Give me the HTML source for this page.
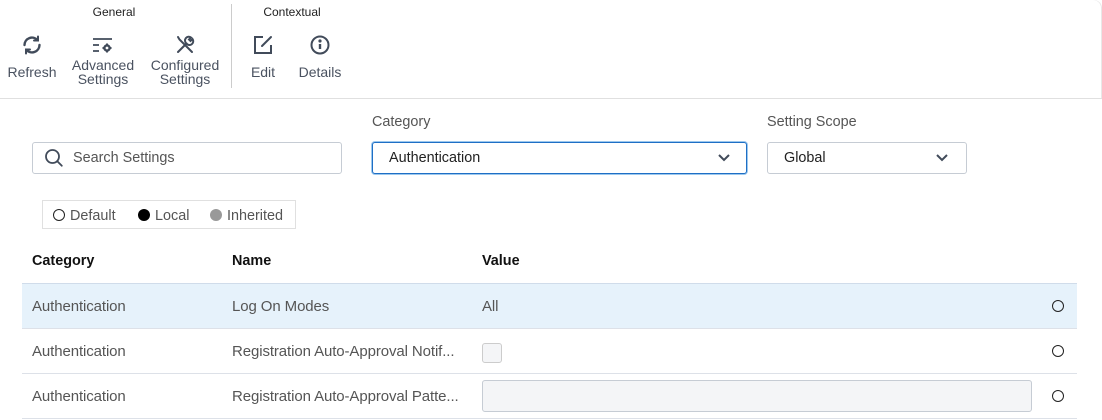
<!DOCTYPE html>
<html><head><meta charset="utf-8"><style>
*{box-sizing:border-box;margin:0;padding:0}
body{width:1102px;height:420px;background:#fff;font-family:"Liberation Sans",sans-serif;position:relative;overflow:hidden;color:#333}
.a{position:absolute}
.lbl{font-size:12px;color:#222;text-align:center}
.tl{font-size:14px;color:#4a5260;text-align:center;line-height:14px;white-space:nowrap}
.ic{position:absolute;width:22px;height:22px}
.box{position:absolute;border:1px solid #c6ccd4;border-radius:3px;background:#fff}
.t{font-size:14.4px;color:#222;position:absolute;line-height:17px}
.row{position:absolute;left:22px;width:1055px;height:45px;border-top:1px solid #dde1e8}
.row span{position:absolute;top:14px;font-size:15px;color:#555;letter-spacing:-0.1px;line-height:17px}
.circ{position:absolute;left:1030px;top:16px;width:12px;height:12px;border:1.3px solid #222;border-radius:50%}
</style></head><body>
<div class="a" style="left:0;top:0;width:1102px;height:99px;border-bottom:1px solid #e0e0e0;border-top-right-radius:8px;box-shadow:inset -1px 0 0 #e8e8e8"></div>
<div class="a lbl" style="left:74px;top:5px;width:80px">General</div>
<div class="a lbl" style="left:252px;top:5px;width:80px">Contextual</div>
<div class="a" style="left:231px;top:4px;width:1px;height:84px;background:#ccc"></div>

<svg class="ic" style="left:21px;top:34px" viewBox="0 0 22 22" fill="none" stroke="#414b5a" stroke-width="2.4" stroke-linecap="round"><path d="M3.5 11a7.5 7.5 0 0 1 13-5"/><path d="M18.5 11a7.5 7.5 0 0 1-13 5"/><path d="M17 2.5v4h-4" stroke-width="2"/><path d="M5 19.5v-4h4" stroke-width="2"/></svg>
<div class="a tl" style="left:2px;top:65px;width:60px">Refresh</div>

<svg class="ic" style="left:92px;top:34px" viewBox="0 0 22 22" fill="none" stroke="#414b5a" stroke-width="1.8"><path d="M1 5h19M1 11h6M1 17h6"/><circle cx="15" cy="14" r="2.6" stroke-width="2.4"/><path d="M15 9.5v2M15 16.5v2M10.5 14h2M17.5 14h2" stroke-width="2"/></svg>
<div class="a tl" style="left:62px;top:58px;width:82px">Advanced<br>Settings</div>

<svg class="ic" style="left:174px;top:34px" viewBox="0 0 22 22" fill="none" stroke="#414b5a" stroke-width="2" stroke-linecap="round"><path d="M4 3l1.5 2.5L18 18"/><path d="M4 18l8.5-8.5"/><path d="M12.5 9.5a3.5 3.5 0 0 1 4.5-6l-2 2 1.5 1.5 2-2a3.5 3.5 0 0 1-6 4.5"/></svg>
<div class="a tl" style="left:144px;top:58px;width:82px">Configured<br>Settings</div>

<svg class="ic" style="left:252px;top:34px" viewBox="0 0 22 22" fill="none" stroke="#414b5a" stroke-width="2"><path d="M11 3H3v16h16v-8"/><path d="M19 3l-9 9" stroke-linecap="round"/></svg>
<div class="a tl" style="left:238px;top:65px;width:50px">Edit</div>

<svg class="ic" style="left:309px;top:34px" viewBox="0 0 22 22" fill="none" stroke="#414b5a" stroke-width="2"><circle cx="11" cy="11" r="8.5"/><path d="M11 10v5" stroke-width="2.4"/><circle cx="11" cy="7" r="0.6" fill="#414b5a"/></svg>
<div class="a tl" style="left:290px;top:65px;width:60px">Details</div>

<div class="box" style="left:32px;top:142px;width:310px;height:32px"></div>
<svg class="a" style="left:44px;top:148px" width="20" height="20" viewBox="0 0 20 20" fill="none" stroke="#414b5a" stroke-width="1.8"><circle cx="8.5" cy="8.5" r="6.5"/><path d="M13.3 13.3l4.5 4.5" stroke-linecap="round"/></svg>
<div class="t" style="left:73px;top:150px;color:#555">Search Settings</div>

<div class="t" style="left:372px;top:114px;color:#555">Category</div>
<div class="box" style="left:372px;top:142px;width:375px;height:32px;border-color:#1f6fc5;box-shadow:0 0 0 1px #9cc8ee"></div>
<div class="t" style="left:389px;top:150px">Authentication</div>
<svg class="a" style="left:717px;top:153px" width="14" height="10" viewBox="0 0 14 10" fill="none" stroke="#414b5a" stroke-width="2"><path d="M2 2l5 5 5-5"/></svg>

<div class="t" style="left:767px;top:114px;color:#555">Setting Scope</div>
<div class="box" style="left:767px;top:142px;width:200px;height:32px"></div>
<div class="t" style="left:784px;top:150px">Global</div>
<svg class="a" style="left:935px;top:153px" width="14" height="10" viewBox="0 0 14 10" fill="none" stroke="#414b5a" stroke-width="2"><path d="M2 2l5 5 5-5"/></svg>

<div class="a" style="left:42px;top:200px;width:254px;height:29px;border:1px solid #e0e0e0"></div>
<div class="a" style="left:53px;top:209px;width:12px;height:12px;border:1.3px solid #222;border-radius:50%"></div>
<div class="t" style="left:70px;top:208px;color:#555">Default</div>
<div class="a" style="left:138px;top:209px;width:12px;height:12px;background:#000;border-radius:50%"></div>
<div class="t" style="left:155px;top:208px;color:#555">Local</div>
<div class="a" style="left:210px;top:209px;width:12px;height:12px;background:#999;border-radius:50%"></div>
<div class="t" style="left:227px;top:208px;color:#555">Inherited</div>

<div class="t" style="left:32px;top:253px;font-weight:bold;color:#111">Category</div>
<div class="t" style="left:232px;top:253px;font-weight:bold;color:#111">Name</div>
<div class="t" style="left:482px;top:253px;font-weight:bold;color:#111">Value</div>

<div class="row" style="top:283px;background:#e6f2fb;border-top-color:#d0dcea"><span style="left:10px">Authentication</span><span style="left:210px">Log On Modes</span><span style="left:460px">All</span><div class="circ"></div></div>
<div class="row" style="top:328px"><span style="left:10px">Authentication</span><span style="left:210px">Registration Auto-Approval Notif...</span><div class="a" style="left:460px;top:14px;width:20px;height:20px;border:1px solid #ccc;border-radius:3px;background:#f4f5f7"></div><div class="circ"></div></div>
<div class="row" style="top:373px;border-bottom:1px solid #dde1e8;height:46px"><span style="left:10px">Authentication</span><span style="left:210px">Registration Auto-Approval Patte...</span><div class="a" style="left:460px;top:6px;width:550px;height:32px;border:1px solid #c6ccd4;border-radius:3px;background:#f4f5f7"></div><div class="circ"></div></div>
</body></html>
